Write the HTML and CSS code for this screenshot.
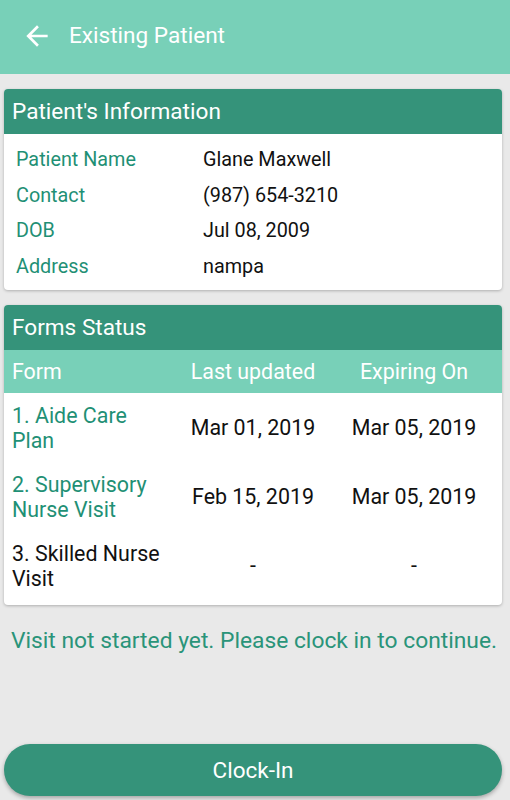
FILE: index.html
```html
<!DOCTYPE html>
<html>
<head>
<meta charset="utf-8">
<link rel="stylesheet" href="styles.css">
</head>
<body>
<div class="app">
  <header class="topbar">
    <svg class="back" viewBox="0 0 24 24" width="32" height="32"><path fill="#fff" d="M20 11H7.83l5.59-5.59L12 4l-8 8 8 8 1.41-1.41L7.83 13H20v-2z"/></svg>
    <span class="title">Existing Patient</span>
  </header>

  <section class="card">
    <div class="card-head">Patient's Information</div>
    <div class="info">
      <div class="row"><span class="lbl">Patient Name</span><span class="val">Glane Maxwell</span></div>
      <div class="row"><span class="lbl">Contact</span><span class="val">(987) 654-3210</span></div>
      <div class="row"><span class="lbl">DOB</span><span class="val">Jul 08, 2009</span></div>
      <div class="row"><span class="lbl">Address</span><span class="val">nampa</span></div>
    </div>
  </section>

  <section class="card forms">
    <div class="card-head">Forms Status</div>
    <div class="grid sub">
      <div class="c1">Form</div><div class="cc">Last updated</div><div class="cc">Expiring On</div>
    </div>
    <div class="grid trow">
      <div class="c1 green">1. Aide Care Plan</div><div class="cc">Mar 01, 2019</div><div class="cc">Mar 05, 2019</div>
    </div>
    <div class="grid trow">
      <div class="c1 green">2. Supervisory Nurse Visit</div><div class="cc">Feb 15, 2019</div><div class="cc">Mar 05, 2019</div>
    </div>
    <div class="grid trow">
      <div class="c1">3. Skilled Nurse Visit</div><div class="cc">-</div><div class="cc">-</div>
    </div>
  </section>

  <p class="msg">Visit not started yet. Please clock in to continue.</p>

  <button class="clock">Clock-In</button>
</div>
</body>
</html>
```

FILE: styles.css
```css
* { box-sizing: border-box; }
html, body { margin: 0; padding: 0; }
body {
  background: #e9e9e9;
  font-family: Roboto, "Noto Sans", sans-serif;
  color: #111;
}
.app {
  height: 800px;
  display: flex;
  flex-direction: column;
}
.topbar {
  height: 74px;
  background: #78d0b8;
  display: flex;
  align-items: center;
  padding-left: 21px;
  flex-shrink: 0;
}
.back { margin-top: -3px; }
.title {
  color: #fff;
  font-size: 22.6px;
  margin-left: 16px;
  margin-top: -3px;
}
.card {
  margin: 15px 8px 0 4px;
  background: #fff;
  border-radius: 4px;
  box-shadow: 0 1px 3px rgba(0,0,0,0.25);
  overflow: hidden;
}
.card-head {
  background: #35937a;
  color: #fff;
  height: 45px;
  line-height: 45px;
  font-size: 22.6px;
  padding-left: 8px;
}
.info { padding: 8px 0 6px 12px; }
.row {
  height: 35.5px;
  display: flex;
  align-items: center;
  font-size: 19.8px;
}
.lbl { width: 187px; color: #1f9075; }
.val { color: #111; }
.grid {
  display: grid;
  grid-template-columns: 176px 146px 176px;
  align-items: center;
}
.sub {
  height: 43px;
  background: #78d0b8;
  color: #fff;
  font-size: 21.4px;
}
.c1 { padding: 0 12px 0 8px; }
.cc { text-align: center; }
.trow {
  height: 69px;
  font-size: 21.4px;
  line-height: 25px;
}
.forms { padding-bottom: 5px; }
.green { color: #1f9075; }
.msg {
  margin: 23px 0 0 11px;
  color: #2a9479;
  font-size: 22.8px;
  line-height: 26px;
  white-space: nowrap;
}
.clock {
  margin: auto 8px 4px 4px;
  height: 52px;
  border: none;
  border-radius: 26px;
  background: #35937a;
  color: #fff;
  font-family: Roboto, "Noto Sans", sans-serif;
  font-size: 22.5px;
  box-shadow: 0 2px 4px rgba(0,0,0,0.3);
}
```
